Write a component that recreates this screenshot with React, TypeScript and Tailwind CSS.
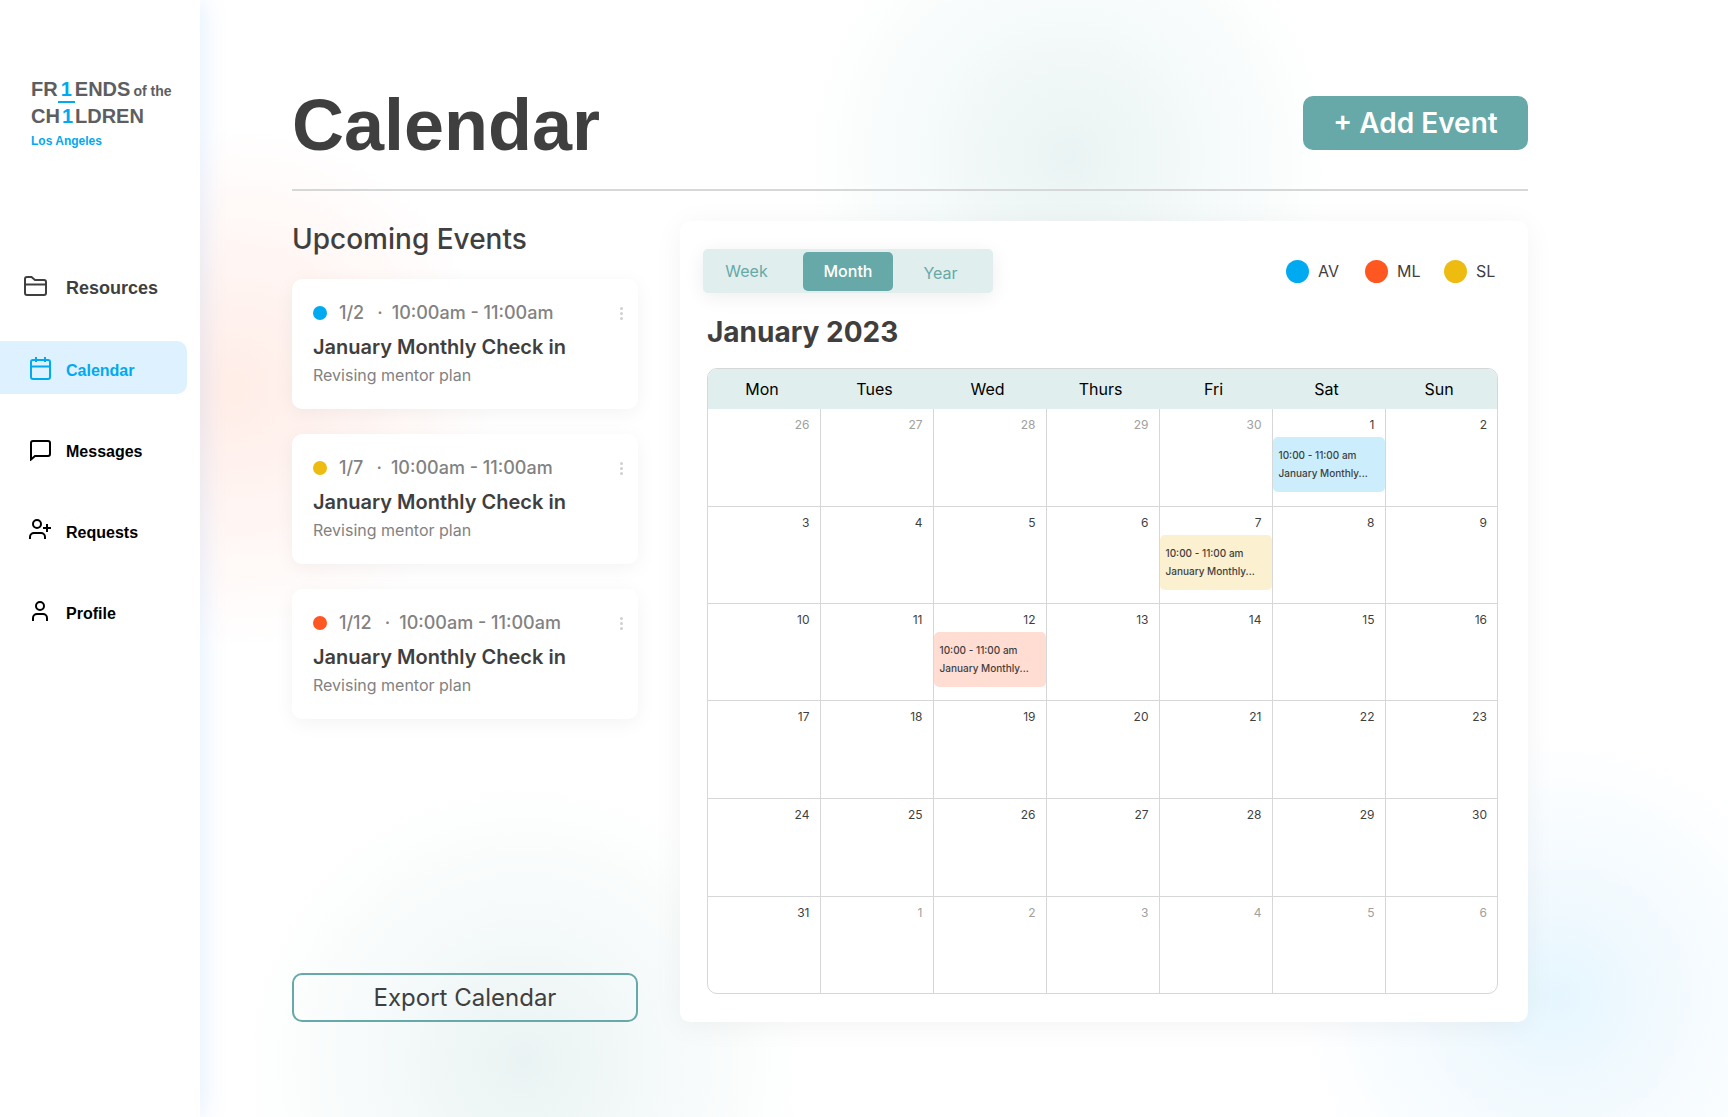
import React from "react";

const AV = "bg-[#00aaf0]";
const ML = "bg-[#ff5722]";
const SL = "bg-[#eebc10]";

type IconProps = { className?: string };

function Svg({ className, children }: { className?: string; children: React.ReactNode }) {
  return (
    <svg
      aria-hidden="true"
      viewBox="0 0 24 24"
      fill="none"
      stroke="currentColor"
      strokeWidth="2"
      className={className}
    >
      {children}
    </svg>
  );
}

function FolderIcon({ className }: IconProps) {
  return (
    <Svg className={className}>
      <path d="M2 18V4a2 2 0 0 1 2-2h4.500l3.500 3h9a2 2 0 0 1 2 2v11a2 2 0 0 1-2 2H4a2 2 0 0 1-2-2Z" />
      <path d="M2 9.500h21" />
    </Svg>
  );
}

function CalendarIcon({ className }: IconProps) {
  return (
    <Svg className={className}>
      <rect x="3" y="4" width="19" height="19" rx="2" />
      <path d="M3 10.500h19M8 1v5M17 1v5" />
    </Svg>
  );
}

function MessageIcon({ className }: IconProps) {
  return (
    <Svg className={className}>
      <path d="M3 22.500V6a2 2 0 0 1 2-2h15a2 2 0 0 1 2 2v11a2 2 0 0 1-2 2H7Z" />
    </Svg>
  );
}

function RequestIcon({ className }: IconProps) {
  return (
    <Svg className={className}>
      <circle cx="9" cy="6" r="4" />
      <path d="M2 21v-2a4 4 0 0 1 4-4h7a4 4 0 0 1 4 4v2M19 6v8M15 10h8" />
    </Svg>
  );
}

function ProfileIcon({ className }: IconProps) {
  return (
    <Svg className={className}>
      <circle cx="12" cy="7" r="4" />
      <path d="M5 22v-3a4 4 0 0 1 4-4h6a4 4 0 0 1 4 4v3" />
    </Svg>
  );
}

function Logo() {
  return (
    <a href="#home" className="ml-[31px] block w-fit font-bold text-[#5d5e61]">
      <span className="flex items-baseline gap-[3px]">
        <span className="text-xl leading-7">
          FR<span className="border-b-2 border-[#00aaf0] px-[3px] pb-px text-[#00aaf0]">1</span>ENDS
        </span>
        <span className="text-sm">of the</span>
      </span>
      <span className="block text-xl leading-[26px]">
        CH<span className="px-0.5 text-[#00aaf0]">1</span>LDREN
      </span>
      <span className="block text-xs leading-6 text-[#00aaf0]">Los Angeles</span>
    </a>
  );
}

const navItems = [
  { label: "Resources", Icon: FolderIcon, row: "pl-[23px] text-[#3f3f3f] text-lg", gap: "mr-[19px]", text: "pt-0.5" },
  { label: "Calendar", Icon: CalendarIcon, row: "pl-7 bg-[#def1ff] text-[#00aaf0]", gap: "mr-[14px]", text: "pt-1.5" },
  { label: "Messages", Icon: MessageIcon, row: "pl-7 text-black", gap: "mr-[14px]", text: "pt-1.5" },
  { label: "Requests", Icon: RequestIcon, row: "pl-7 text-black", gap: "mr-[14px]", text: "pt-1.5" },
  { label: "Profile", Icon: ProfileIcon, row: "pl-7 text-black", gap: "mr-[14px]", text: "pt-1.5" },
];

function Sidebar() {
  return (
    <aside className="relative w-[200px] shrink-0 bg-white pt-[75px] font-['Liberation_Sans',sans-serif] shadow-[4px_0_24px_rgba(0,120,255,0.1)]">
      <Logo />
      <nav className="mt-[107px] mr-[13px] flex flex-col gap-7">
        {navItems.map(({ label, Icon, row, gap, text }) => (
          <a
            key={label}
            href={"#" + label.toLowerCase()}
            aria-current={label === "Calendar" ? "page" : undefined}
            className={"flex h-[53px] items-center rounded-r-[10px] font-bold " + row}
          >
            <Icon className={"size-6 " + gap} />
            <span className={text}>{label}</span>
          </a>
        ))}
      </nav>
    </aside>
  );
}

const upcoming = [
  { date: "1/2", dot: AV },
  { date: "1/7", dot: SL },
  { date: "1/12", dot: ML },
];

function EventCard({ date, dot }: { date: string; dot: string }) {
  return (
    <li className="h-[130px] rounded-[10px] bg-white pt-5 pr-[13px] pl-[21px] shadow-[0_4px_20px_rgba(0,0,0,0.05)]">
      <div className="flex h-7 items-center text-lg font-medium text-[#828282]">
        <span className={"mr-3 size-[14px] rounded-full " + dot} />
        <span>{date}</span>
        <span className="mr-[9px] ml-[13px]">·</span>
        <span>10:00am - 11:00am</span>
        <button type="button" aria-label="Event options" className="ml-auto flex w-2 flex-col items-center gap-[2px]">
          <span className="size-[3px] rounded-full bg-[#d0d0d0]" />
          <span className="size-[3px] rounded-full bg-[#d0d0d0]" />
          <span className="size-[3px] rounded-full bg-[#d0d0d0]" />
        </button>
      </div>
      <h3 className="mt-1 text-xl leading-8 font-semibold text-[#3f3f3f]">January Monthly Check in</h3>
      <p className="text-base leading-6 text-[#828282]">Revising mentor plan</p>
    </li>
  );
}

const legend = [
  { name: "AV", dot: AV },
  { name: "ML", dot: ML },
  { name: "SL", dot: SL },
];

const weekdays = ["Mon", "Tues", "Wed", "Thurs", "Fri", "Sat", "Sun"];

const weeks = [
  { height: "h-[97px]", days: [26, 27, 28, 29, 30, 1, 2] },
  { height: "h-[97px]", days: [3, 4, 5, 6, 7, 8, 9] },
  { height: "h-[97px]", days: [10, 11, 12, 13, 14, 15, 16] },
  { height: "h-[98px]", days: [17, 18, 19, 20, 21, 22, 23] },
  { height: "h-[98px]", days: [24, 25, 26, 27, 28, 29, 30] },
  { height: "h-[97px]", days: [31, 1, 2, 3, 4, 5, 6] },
];

const booked: Record<string, string> = {
  "0-5": "bg-[#cceefc]",
  "1-4": "bg-[#fbf0cf]",
  "2-2": "bg-[#ffddd3]",
};

function outsideMonth(week: number, day: number) {
  return (week === 0 && day < 5) || (week === 5 && day > 0);
}

function MonthTable() {
  return (
    <div className="overflow-hidden rounded-[10px] border border-[#d6d8d8]">
      <table className="w-full table-fixed border-collapse">
        <thead>
          <tr className="h-10 bg-[#e0eeed]">
            {weekdays.map((day) => (
              <th
                key={day}
                scope="col"
                className="w-[113px] pr-1 text-base font-normal text-black first:w-[112px] last:w-auto"
              >
                {day}
              </th>
            ))}
          </tr>
        </thead>
        <tbody>
          {weeks.map(({ height, days }, w) => (
            <tr key={w} className={"border-b border-[#d6d8d8] last:border-b-0 " + height}>
              {days.map((day, d) => (
                <td key={d} className="border-r border-[#d6d8d8] p-0 align-top last:border-r-0">
                  <div
                    className={
                      "pt-[7px] pr-[10px] text-right text-xs leading-[18px] " +
                      (outsideMonth(w, d) ? "text-[#a0a0a0]" : "text-[#3f3f3f]")
                    }
                  >
                    {day}
                  </div>
                  {booked[w + "-" + d] && (
                    <div
                      className={
                        "mt-[3px] h-[55px] rounded-[5px] pt-[9px] pl-1.5 text-[10px] leading-[18px] font-medium whitespace-nowrap text-[#3f3f3f] " +
                        booked[w + "-" + d]
                      }
                    >
                      <p>10:00 - 11:00 am</p>
                      <p>January Monthly...</p>
                    </div>
                  )}
                </td>
              ))}
            </tr>
          ))}
        </tbody>
      </table>
    </div>
  );
}

function CalendarPanel() {
  return (
    <section className="flex-1 rounded-[10px] bg-white pt-7 pr-[30px] pb-7 pl-[27px] shadow-[0_4px_30px_rgba(0,0,0,0.05)]">
      <div className="-ml-1 flex items-center justify-between">
        <div className="flex h-11 items-center rounded-[5px] bg-[#e0eeed] px-[3px] text-base text-[#66a9a8] shadow-[0_4px_20px_rgba(0,0,0,0.07)]">
          <button type="button" className="w-[97px] pr-4">
            Week
          </button>
          <button type="button" aria-pressed="true" className="h-[39px] w-[90px] rounded-[5px] bg-[#66a9a8] font-medium text-white">
            Month
          </button>
          <button type="button" className="w-[97px] pt-1 pr-0.5">
            Year
          </button>
        </div>
        <ul className="flex items-center gap-[25px] text-base text-[#3f3f3f]">
          {legend.map(({ name, dot }) => (
            <li key={name} className="flex w-[54px] items-center gap-[9px]">
              <span className={"size-[23px] shrink-0 rounded-full " + dot} />
              {name}
            </li>
          ))}
        </ul>
      </div>
      <h2 className="mt-5 mb-[17px] text-[28px] leading-[38px] font-bold text-[#3f3f3f]">January 2023</h2>
      <MonthTable />
    </section>
  );
}

function Backdrop() {
  return (
    <div
      aria-hidden="true"
      className="absolute inset-0 bg-[radial-gradient(circle_at_1070px_157px,#eaf3f3_0,#f5fafa_140px,transparent_264px),radial-gradient(circle_at_524px_1062px,#eaf3f3_0,#f6fafa_150px,transparent_280px),radial-gradient(circle_at_233px_388px,#ffede7_0,#fff5f2_120px,transparent_260px),radial-gradient(circle_at_1557px_997px,#e6f6fe_0,#f5fbff_140px,transparent_260px)]"
    />
  );
}

export default function App() {
  return (
    <div className="relative flex min-h-screen overflow-hidden bg-white font-[Inter,sans-serif]">
      <Backdrop />
      <Sidebar />
      <main className="relative flex-1 pt-[82px] pr-[200px] pb-20 pl-[92px]">
        <header className="flex items-center justify-between border-b-2 border-[#d6d8d8] pb-[25px]">
          <h1 className="pt-1 font-['Liberation_Sans',sans-serif] text-7xl leading-[78px] font-bold text-[#3f3f3f]">Calendar</h1>
          <button type="button" className="h-[54px] w-[225px] rounded-[10px] bg-[#66a9a8] text-[28px] leading-none font-semibold text-white">
            + Add Event
          </button>
        </header>
        <div className="mt-[30px] flex gap-[42px]">
          <section className="flex w-[346px] shrink-0 flex-col">
            <h2 className="text-[28px] leading-9 font-medium text-[#3f3f3f]">Upcoming Events</h2>
            <ul className="mt-[22px] flex flex-col gap-[25px]">
              {upcoming.map((e) => (
                <EventCard key={e.date} {...e} />
              ))}
            </ul>
            <button type="button" className="mt-auto h-[49px] rounded-[10px] border-2 border-[#66a9a8] text-2xl leading-none text-[#3f3f3f]">
              Export Calendar
            </button>
          </section>
          <CalendarPanel />
        </div>
      </main>
    </div>
  );
}
